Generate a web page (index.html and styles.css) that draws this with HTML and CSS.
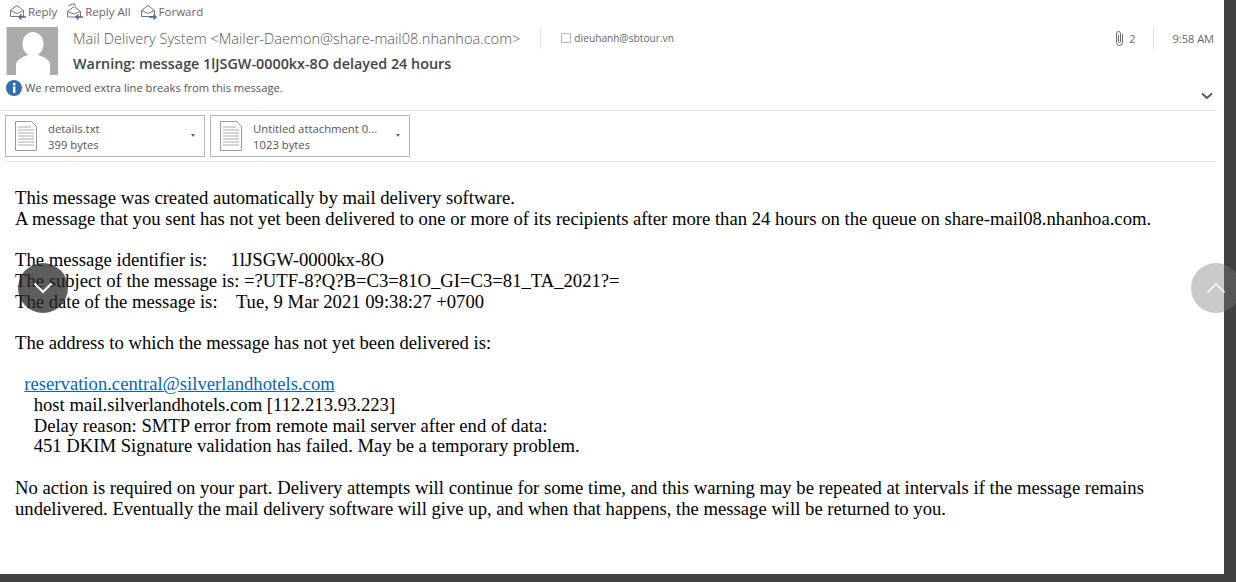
FILE: index.html
```html
<!DOCTYPE html>
<html lang="en">

<head>
    <meta charset="UTF-8">
    <meta name="viewport" content="width=device-width, initial-scale=1.0">
    <title>Warning: message delayed 24 hours</title>
    <link rel="stylesheet" href="styles.css">
</head>

<body>

    <div class="reader">
        <!-- toolbar -->
        <div class="toolbar">
            <span class="tool">
                <svg width="18" height="17" viewBox="0 0 18 17" fill="none">
                    <path d="M1.500 7.500 8 2.500l6.500 5v6h-13z" stroke="#777" />
                    <path d="M1.500 7.500 8 10.500l6.500-3" stroke="#777" />
                    <path d="M17 14H10M12.500 11.500 10 14l2.500 2.500" stroke="#7d4f9e" stroke-width="1.400" />
                </svg>
                Reply
            </span>
            <span class="tool">
                <svg width="18" height="17" viewBox="0 0 18 17" fill="none">
                    <path d="M2.500 2.800 7 .8l3 1.400" stroke="#777" />
                    <path d="M1.500 8.500 8 3.500l6.500 5v5.500h-13z" stroke="#777" />
                    <path d="M1.500 8.500 8 11l6.500-2.500" stroke="#777" />
                    <path d="M17 14H10M12.500 11.500 10 14l2.500 2.500" stroke="#7d4f9e" stroke-width="1.400" />
                </svg>
                Reply All
            </span>
            <span class="tool">
                <svg width="18" height="17" viewBox="0 0 18 17" fill="none">
                    <path d="M1.500 7.500 8 2.500l6.500 5v6h-13z" stroke="#777" />
                    <path d="M1.500 7.500 8 10.500l6.500-3" stroke="#777" />
                    <path d="M9 14h7M13.500 11.500 16 14l-2.500 2.500" stroke="#2f6ea5" stroke-width="1.400" />
                </svg>
                Forward
            </span>
        </div>

        <!-- sender block -->
        <div class="head">
            <svg class="avatar" width="52" height="48" viewBox="0 0 52 48">
                <rect width="52" height="48" fill="#ababab" />
                <rect x="0" y="0" width="1" height="48" fill="#d8d8d8" />
                <ellipse cx="27" cy="17" rx="10.500" ry="12" fill="#fff" />
                <path d="M10 48V38c0-5 6-8 12-10h10c6 2 12 5 12 10v10z" fill="#fff" />
            </svg>
            <div class="head-text">
                <div class="from-row">
                    <span class="from">Mail Delivery System &lt;Mailer-Daemon@share-mail08.nhanhoa.com&gt;</span>
                    <span class="to"><span class="to-box"></span>dieuhanh@sbtour.vn</span>
                    <span class="meta">
                        <span class="clip">
                            <svg width="11" height="17" viewBox="0 0 11 17" fill="none">
                                <path d="M8.500 4v8.500a3 3 0 0 1-6 0V3.500a2 2 0 0 1 4 0v8a1 1 0 0 1-2 0V5" stroke="#666" />
                            </svg>
                            2
                        </span>
                        <span class="time">9:58 AM</span>
                    </span>
                </div>
                <div class="subject">Warning: message 1lJSGW-0000kx-8O delayed 24 hours</div>
            </div>
        </div>

        <div class="info">
            <svg width="16" height="16" viewBox="0 0 16 16">
                <circle cx="8" cy="8" r="8" fill="#2f6fb0" />
                <rect x="7" y="6.500" width="2.400" height="6.500" fill="#fff" />
                <rect x="7" y="3" width="2.400" height="2.400" fill="#fff" />
            </svg>
            <span>We removed extra line breaks from this message.</span>
            <svg class="expand" width="12" height="8" viewBox="0 0 12 8" fill="none">
                <path d="M1 1.500 6 6l5-4.500" stroke="#555" stroke-width="1.800" />
            </svg>
        </div>

        <!-- attachments -->
        <div class="attachments">
            <div class="attachment">
                <svg width="22" height="30" viewBox="0 0 22 30" fill="none">
                    <path d="M.5.500h16l5 5v24H.5z" stroke="#999" />
                    <path d="M3 6h13M3 9h16M3 12h16M3 15h16M3 18h16M3 21h16M3 24h16" stroke="#aaa" />
                </svg>
                <div class="att-text">
                    <div class="att-name">details.txt</div>
                    <div class="att-size">399 bytes</div>
                </div>
                <span class="caret"></span>
            </div>
            <div class="attachment">
                <svg width="22" height="30" viewBox="0 0 22 30" fill="none">
                    <path d="M.5.500h16l5 5v24H.5z" stroke="#999" />
                    <path d="M3 6h13M3 9h16M3 12h16M3 15h16M3 18h16M3 21h16M3 24h16" stroke="#aaa" />
                </svg>
                <div class="att-text">
                    <div class="att-name">Untitled attachment 0...</div>
                    <div class="att-size">1023 bytes</div>
                </div>
                <span class="caret"></span>
            </div>
        </div>

        <!-- message body -->
        <div class="message">This message was created automatically by mail delivery software.
A message that you sent has not yet been delivered to one or more of its recipients after more than 24 hours on the queue on share-mail08.nhanhoa.com.

The message identifier is:     1lJSGW-0000kx-8O
The subject of the message is: =?UTF-8?Q?B=C3=81O_GI=C3=81_TA_2021?=
The date of the message is:    Tue, 9 Mar 2021 09:38:27 +0700

The address to which the message has not yet been delivered is:

  <a href="#">reservation.central@silverlandhotels.com</a>
    host mail.silverlandhotels.com [112.213.93.223]
    Delay reason: SMTP error from remote mail server after end of data:
    451 DKIM Signature validation has failed. May be a temporary problem.

No action is required on your part. Delivery attempts will continue for some time, and this warning may be repeated at intervals if the message remains undelivered. Eventually the mail delivery software will give up, and when that happens, the message will be returned to you.</div>
    </div>

    <!-- floating nav buttons -->
    <div class="nav-btn nav-down">
        <svg width="20" height="12" viewBox="0 0 20 12" fill="none">
            <path d="M1.500 1.500 10 10l8.500-8.500" stroke="#fff" stroke-width="2" />
        </svg>
    </div>
    <div class="nav-btn nav-up">
        <svg width="20" height="12" viewBox="0 0 20 12" fill="none">
            <path d="M1.500 10.500 10 2l8.500 8.500" stroke="#f2f2f2" stroke-width="2" />
        </svg>
    </div>

</body>

</html>
```

FILE: styles.css
```css
body {
    margin: 0;
    width: 1236px;
    height: 582px;
    overflow: hidden;
    background-color: #414141;
    font-family: "Open Sans", "Noto Sans", sans-serif;
    color: #444;
}

.reader {
    width: 1224px;
    height: 574px;
    background-color: #fff;
    overflow: hidden;
}

.toolbar {
    display: flex;
    gap: 9px;
    height: 23px;
    padding-left: 9px;
    align-items: center;
    font-size: 11.500px;
    color: #666;
}

.tool {
    display: flex;
    align-items: center;
    gap: 1px;
}

.head {
    display: flex;
    gap: 15px;
    height: 50px;
    padding-left: 6px;
    padding-top: 4px;
}

.head-text {
    flex: 1;
}

.from-row {
    display: flex;
    align-items: stretch;
    height: 22px;
}

.from {
    font-size: 14.580px;
    line-height: 22px;
    font-weight: 300;
    color: #555;
    padding-right: 20px;
    border-right: 1px solid #e3e3e3;
}

.to {
    display: flex;
    align-items: center;
    font-size: 10.200px;
    color: #666;
    margin-left: 20px;
}

.to-box {
    width: 8px;
    height: 8px;
    border: 1px solid #bbb;
    margin-right: 3px;
}

.meta {
    display: flex;
    align-items: stretch;
    margin-left: auto;
    margin-right: 10px;
    font-size: 11px;
    color: #666;
}

.clip {
    display: flex;
    align-items: center;
    gap: 4px;
    padding-right: 17px;
    border-right: 1px solid #e3e3e3;
}

.time {
    display: flex;
    align-items: center;
    padding-left: 19px;
}

.subject {
    font-size: 14.350px;
    font-weight: 600;
    color: #444;
    margin-top: 5px;
}

.info {
    display: flex;
    align-items: flex-start;
    gap: 3px;
    height: 30px;
    width: 1211px;
    padding-left: 6px;
    padding-top: 3px;
    font-size: 11.200px;
    line-height: 16px;
    color: #555;
    border-bottom: 1px solid #e4e4e4;
}

.expand {
    margin-left: auto;
    margin-top: 12px;
    margin-right: 4px;
}

.attachments {
    display: flex;
    gap: 5px;
    width: 1211px;
    margin-left: 5px;
    padding: 4px 0;
    border-bottom: 1px solid #e4e4e4;
}

.attachment {
    display: flex;
    align-items: center;
    width: 198px;
    height: 40px;
    border: 1px solid #b4b4b4;
    position: relative;
}

.attachment svg {
    margin-left: 9px;
}

.att-text {
    margin-left: 11px;
    margin-top: 1px;
    font-size: 11.300px;
    line-height: 16px;
    color: #555;
}

.caret {
    position: absolute;
    right: 9px;
    top: 18px;
    border-left: 2.500px solid transparent;
    border-right: 2.500px solid transparent;
    border-top: 3px solid #666;
}

.message {
    padding: 26px 0 0 15px;
    font-family: "Liberation Serif", serif;
    font-size: 18.670px;
    line-height: 20.700px;
    color: #000;
    white-space: pre-wrap;
}

.message a {
    color: #0f62ad;
}

/* round buttons over the page */
.nav-btn {
    position: absolute;
    top: 263px;
    width: 50px;
    height: 50px;
    border-radius: 50%;
    display: flex;
    align-items: center;
    justify-content: center;
}

.nav-down {
    left: 18px;
    background-color: rgba(40, 40, 40, 0.75);
}

.nav-up {
    left: 1191px;
    background-color: rgba(120, 120, 120, 0.4);
}
```
